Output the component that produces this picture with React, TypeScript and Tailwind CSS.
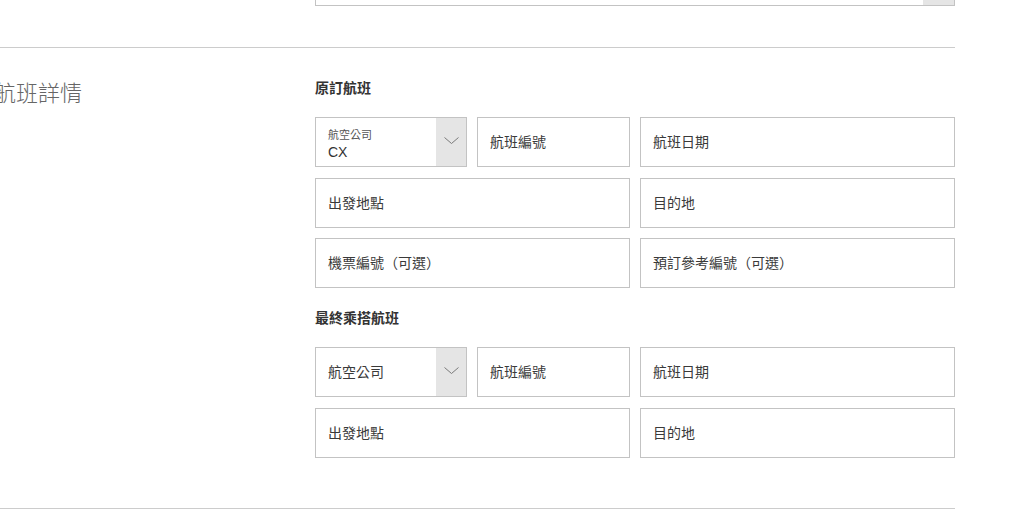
import React from "react";

const FONT = '"Liberation Sans", "Noto Sans CJK TC", sans-serif';

function Chevron() {
  return (
    <svg width="15" height="7" viewBox="0 0 15 7" fill="none">
      <polyline points="0.5,0.5 7.5,6.5 14.5,0.5" stroke="#7a7a7a" strokeWidth="1" />
    </svg>
  );
}

function Field({ text, className = "" }: { text: string; className?: string }) {
  return (
    <div
      className={
        "h-[50px] border border-[#c3c3c3] bg-white flex items-center px-[12px] text-[14px] text-[#3a3a3a] " +
        className
      }
    >
      {text}
    </div>
  );
}

function Select({ label, value }: { label: string; value?: string }) {
  return (
    <div className="h-[50px] w-[152px] border border-[#c3c3c3] bg-white flex">
      {value ? (
        <div className="flex-1 flex flex-col pl-[12px] pt-[10px]">
          <span className="text-[11px] leading-[14px] text-[#555]">{label}</span>
          <span className="text-[14px] leading-[18px] text-[#333] mt-[1px]">{value}</span>
        </div>
      ) : (
        <div className="flex-1 flex items-center pl-[12px] text-[14px] text-[#3a3a3a]">{label}</div>
      )}
      <div className="w-[30px] bg-[#e5e5e5] flex items-center justify-center pb-[3px]">
        <Chevron />
      </div>
    </div>
  );
}

export default function App() {
  return (
    <div className="w-[1034px] h-[515px] overflow-hidden bg-white" style={{ fontFamily: FONT }}>
      <div className="w-[955px]">
        <div className="ml-[315px] -mt-[44px] h-[50px] border border-[#c3c3c3] flex">
          <div className="flex-1" />
          <div className="w-[31px] bg-[#e5e5e5]" />
        </div>
        <div className="mt-[41px] border-t border-b border-[#cccccc] flex pt-[30px] pb-[50px]">
          <div className="w-[315px] shrink-0">
            <div className="-ml-[6px] mt-[1px] text-[22px] leading-[30px] text-[#666] font-light">航班詳情</div>
          </div>
          <div className="w-[640px] flex flex-col">
            <div className="text-[14px] leading-5 font-bold text-[#333] mb-[19px]">原訂航班</div>
            <div className="flex gap-[10px]">
              <Select label="航空公司" value="CX" />
              <Field text="航班編號" className="w-[153px]" />
              <Field text="航班日期" className="w-[315px]" />
            </div>
            <div className="flex gap-[10px] mt-[11px]">
              <Field text="出發地點" className="w-[315px]" />
              <Field text="目的地" className="w-[315px]" />
            </div>
            <div className="flex gap-[10px] mt-[10px]">
              <Field text="機票編號（可選）" className="w-[315px]" />
              <Field text="預訂參考編號（可選）" className="w-[315px]" />
            </div>
            <div className="text-[14px] leading-5 font-bold text-[#333] mt-[20px] mb-[19px]">最終乘搭航班</div>
            <div className="flex gap-[10px]">
              <Select label="航空公司" />
              <Field text="航班編號" className="w-[153px]" />
              <Field text="航班日期" className="w-[315px]" />
            </div>
            <div className="flex gap-[10px] mt-[11px]">
              <Field text="出發地點" className="w-[315px]" />
              <Field text="目的地" className="w-[315px]" />
            </div>
          </div>
        </div>
      </div>
    </div>
  );
}
